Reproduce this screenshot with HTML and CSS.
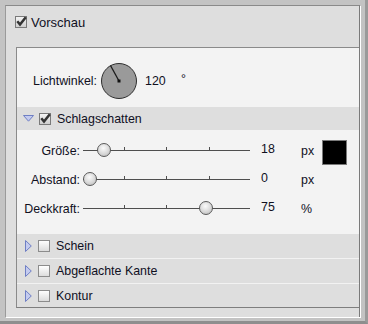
FILE: index.html
```html
<!DOCTYPE html>
<html lang="de">
<head>
    <meta charset="UTF-8">
    <title>Effekte</title>
    <link rel="stylesheet" href="styles.css">
</head>
<body>
    <div class="window">
        <div class="panel">
            <div class="top-check">
                <span class="cb checked"><svg width="12" height="12" viewBox="0 0 12 12"><path d="M2.3 5.3 L5 8.6 L10.8 1.3" fill="none" stroke="#333333" stroke-width="2.5"/></svg></span>
                <span>Vorschau</span>
            </div>
            <div class="effects">
                <div class="angle-row">
                    <span class="angle-label">Lichtwinkel:</span>
                    <svg class="dial" width="38" height="38" viewBox="0 0 38 38">
                        <circle cx="19" cy="19" r="17.5" fill="#9a9a9a" stroke="#2e2e2e" stroke-width="1"/>
                        <line x1="19" y1="19" x2="10.5" y2="3.5" stroke="#1a1a1a" stroke-width="1.3"/>
                        <rect x="17.5" y="17.5" width="3" height="3" fill="#111"/>
                    </svg>
                    <span class="angle-value">120</span>
                    <span class="angle-unit">°</span>
                </div>

                <div class="group-head">
                    <svg class="tri" width="11" height="7" viewBox="0 0 11 7"><path d="M0.5 0.5 L10.5 0.5 L5.5 6.2 Z" fill="#c4cbef" stroke="#6f7fc4"/></svg>
                    <span class="cb checked"><svg width="12" height="12" viewBox="0 0 12 12"><path d="M2.3 5.3 L5 8.6 L10.8 1.3" fill="none" stroke="#333333" stroke-width="2.5"/></svg></span>
                    <span>Schlagschatten</span>
                </div>

                <div class="sliders">
                    <div class="slider-row">
                        <span class="s-label">Größe:</span>
                        <div class="track">
                            <i class="tick t1"></i><i class="tick t2"></i><i class="tick t3"></i>
                            <span class="thumb" style="left:14px"></span>
                        </div>
                        <span class="s-value">18</span>
                        <span class="s-unit">px</span>
                        <span class="swatch"></span>
                    </div>
                    <div class="slider-row">
                        <span class="s-label">Abstand:</span>
                        <div class="track">
                            <i class="tick t1"></i><i class="tick t2"></i><i class="tick t3"></i>
                            <span class="thumb" style="left:0px"></span>
                        </div>
                        <span class="s-value">0</span>
                        <span class="s-unit">px</span>
                    </div>
                    <div class="slider-row">
                        <span class="s-label">Deckkraft:</span>
                        <div class="track">
                            <i class="tick t1"></i><i class="tick t2"></i><i class="tick t3"></i>
                            <span class="thumb" style="left:116px"></span>
                        </div>
                        <span class="s-value">75</span>
                        <span class="s-unit">%</span>
                    </div>
                </div>

                <div class="group-row">
                    <svg class="tri-r" width="7" height="12" viewBox="0 0 7 12"><path d="M0.5 0.5 L6.3 6 L0.5 11.5 Z" fill="#c4cbef" stroke="#6f7fc4"/></svg>
                    <span class="cb"></span>
                    <span>Schein</span>
                </div>
                <div class="group-row sep mid">
                    <svg class="tri-r" width="7" height="12" viewBox="0 0 7 12"><path d="M0.5 0.5 L6.3 6 L0.5 11.5 Z" fill="#c4cbef" stroke="#6f7fc4"/></svg>
                    <span class="cb"></span>
                    <span>Abgeflachte Kante</span>
                </div>
                <div class="group-row sep">
                    <svg class="tri-r" width="7" height="12" viewBox="0 0 7 12"><path d="M0.5 0.5 L6.3 6 L0.5 11.5 Z" fill="#c4cbef" stroke="#6f7fc4"/></svg>
                    <span class="cb"></span>
                    <span>Kontur</span>
                </div>
            </div>
        </div>
    </div>
</body>
</html>
```

FILE: styles.css
```css
body{
    margin:0px;
    padding:0px;
    font-family:"Liberation Sans", Arial, sans-serif;
    font-size:12.4px;
    color:#10101e;
    background-color:#c3c3c3;
}

.window{
    width:368px;
    height:324px;
    box-sizing:border-box;
    padding:5px 0px 0px 5px;
    border-right:3px solid #9a9a9a;
    border-bottom:3px solid #8e8e8e;
}

.panel{
    width:355px;
    height:312px;
    box-sizing:border-box;
    background-color:#dedede;
    border-top:1px solid #8a8a8a;
    border-left:1px solid #9a9a9a;
    border-right:1px solid #7a7a7a;
    box-shadow:1px 1px 0px #ffffff;
}

.top-check{
    height:41px;
    box-sizing:border-box;
    padding:10px 0px 0px 9px;
    display:flex;
    align-items:flex-start;
    gap:4px;
    font-size:13px;
    line-height:13px;
}

.cb{
    width:12px;
    height:12px;
    box-sizing:border-box;
    border:1px solid #8c8c8c;
    background:linear-gradient(#ffffff, #dcdcdc);
    display:block;
    flex:none;
}
.cb.checked{
    border-color:#7a7a7a;
    background:linear-gradient(#f4f4f4, #cfcfcf);
}
.cb svg{
    display:block;
    margin:-1px 0px 0px -1px;
}

.effects{
    margin-left:10px;
    width:343px;
    height:261px;
    box-sizing:border-box;
    border-top:1px solid #8a8a8a;
    border-left:1px solid #8a8a8a;
    border-bottom:1px solid #7e7e7e;
    background-color:#f3f3f3;
}

.angle-row{
    height:59px;
    box-sizing:border-box;
    padding:14px 0px 0px 16px;
    display:flex;
    align-items:flex-start;
}
.angle-label{
    margin-top:12px;
}
.dial{
    display:block;
    margin-left:3px;
}
.angle-value{
    margin:12px 0px 0px 7px;
    width:36px;
}
.angle-unit{
    margin-top:10px;
}

.group-head{
    height:23px;
    background-color:#dedede;
    display:flex;
    align-items:center;
    padding-left:6px;
}
.tri{
    display:block;
    margin-right:5px;
}
.group-head .cb{
    margin-right:6px;
}

.sliders{
    height:104px;
    box-sizing:border-box;
    padding-top:6px;
}

.slider-row{
    height:29px;
    display:flex;
    align-items:center;
}
.s-label{
    width:65px;
    box-sizing:border-box;
    padding-right:2px;
    text-align:right;
}
.track{
    position:relative;
    width:167px;
    height:1px;
    margin-left:1px;
    background-color:#4e4e4e;
}
.tick{
    position:absolute;
    top:-3px;
    width:1px;
    height:3px;
    background-color:#4e4e4e;
}
.t1{ left:41px; }
.t2{ left:83px; }
.t3{ left:126px; }
.thumb{
    position:absolute;
    top:-7px;
    width:14px;
    height:14px;
    box-sizing:border-box;
    border-radius:50%;
    border:1px solid #5a5a5a;
    background:radial-gradient(circle at 45% 35%, #fbfbfb 0%, #d8d8d8 55%, #b4b4b4 100%);
}
.s-value{
    margin-left:11px;
    width:40px;
    margin-top:-3px;
}
.s-unit{
    width:21px;
}
.swatch{
    width:25px;
    height:25px;
    box-sizing:border-box;
    border:1px solid #7a7a7a;
    background-color:#000000;
    margin-top:3px;
}

.group-row{
    height:24px;
    box-sizing:border-box;
    background-color:#dedede;
    display:flex;
    align-items:center;
    padding-left:8px;
}
.group-row.sep{
    border-top:1px solid #f2f2f2;
}
.group-row.mid{
    height:25px;
}
.tri-r{
    display:block;
    margin-right:6px;
}
.group-row .cb{
    margin-right:6px;
}
```
